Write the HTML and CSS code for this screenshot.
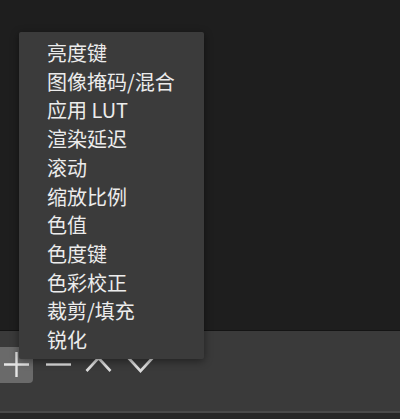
FILE: index.html
```html
<!DOCTYPE html>
<html lang="zh-CN">
<head>
    <meta charset="UTF-8">
    <title>效果菜单</title>
    <link rel="stylesheet" href="styles.css">
</head>
<body>

<div class="stage"></div>

<div class="toolbar">
    <button class="tool tool-add">
        <svg width="33" height="36" viewBox="0 0 33 36"><path d="M4 17.5H29M16.5 5V30" stroke="#e6e6e6" stroke-width="2.4" fill="none"/></svg>
    </button>
    <button class="tool tool-remove">
        <svg width="27" height="36" viewBox="0 0 27 36"><path d="M1 17.5H26" stroke="#dcdcdc" stroke-width="2.4" fill="none"/></svg>
    </button>
    <button class="tool tool-up">
        <svg width="27" height="36" viewBox="0 0 27 36"><path d="M1.5 24L13.5 11L25.5 24" stroke="#dcdcdc" stroke-width="2.6" fill="none"/></svg>
    </button>
    <button class="tool tool-down">
        <svg width="27" height="36" viewBox="0 0 27 36"><path d="M1.5 11L13.5 24L25.5 11" stroke="#dcdcdc" stroke-width="2.6" fill="none"/></svg>
    </button>
</div>

<div class="footer"></div>

<ul class="menu">
    <li>亮度键</li>
    <li>图像掩码/混合</li>
    <li>应用 LUT</li>
    <li>渲染延迟</li>
    <li>滚动</li>
    <li>缩放比例</li>
    <li>色值</li>
    <li>色度键</li>
    <li>色彩校正</li>
    <li>裁剪/填充</li>
    <li>锐化</li>
</ul>

</body>
</html>
```

FILE: styles.css
```css
body {
    margin: 0;
    padding: 0;
    width: 400px;
    height: 419px;
    overflow: hidden;
    background: #272727;
    font-family: "Noto Sans CJK SC", "Noto Sans", sans-serif;
    position: relative;
}
.stage {
    height: 331px;
    background: #1e1e1e;
    border-bottom: 1px solid #141414;
    box-sizing: border-box;
}
.toolbar {
    height: 82px;
    background: #3a3a3a;
    border-bottom: 2px solid #4a4a4a;
    box-sizing: border-box;
    display: flex;
    align-items: flex-start;
    padding-top: 16px;
}
.tool {
    border: none;
    background: none;
    padding: 0;
    margin: 0;
    height: 36px;
    display: flex;
}
.tool-add {
    width: 33px;
    background: #6a6a6a;
    border-radius: 0 4px 4px 0;
}
.tool-remove {
    margin-left: 12px;
}
.tool-up {
    margin-left: 13px;
}
.tool-down {
    margin-left: 15px;
}
.footer {
    height: 6px;
    background: #272727;
}
.menu {
    position: absolute;
    top: 32px;
    left: 19px;
    width: 185px;
    height: 327px;
    margin: 0;
    padding: 7px 0 0 28px;
    box-sizing: border-box;
    list-style: none;
    background: #3b3b3b;
    border-radius: 2px;
    box-shadow: 0 2px 8px rgba(0, 0, 0, 0.45);
    color: #ececec;
    font-size: 20px;
    line-height: 28.7px;
}
```
